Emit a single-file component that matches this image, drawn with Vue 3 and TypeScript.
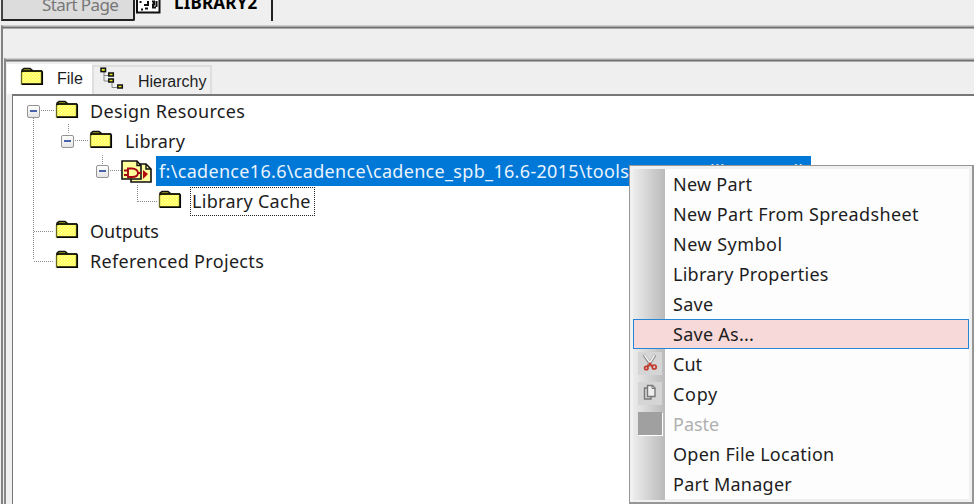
<script setup lang="ts">
type Row = { text: string; depth: number; expander?: boolean; kind?: 'library'; state?: 'selected' | 'focused'; id: string }
const rows: Row[] = [
  { id: 'design', text: 'Design Resources', depth: 0, expander: true },
  { id: 'library', text: 'Library', depth: 1, expander: true },
  { id: 'path', text: 'f:\\cadence16.6\\cadence\\cadence_spb_16.6-2015\\tools\\capture\\library2.olb', depth: 2, expander: true, kind: 'library', state: 'selected' },
  { id: 'cache', text: 'Library Cache', depth: 3, state: 'focused' },
  { id: 'outputs', text: 'Outputs', depth: 0 },
  { id: 'projects', text: 'Referenced Projects', depth: 0 },
]
type Item = { text: string; icon?: 'cut' | 'copy' | 'paste'; active?: boolean; disabled?: boolean }
const items: Item[] = [
  { text: 'New Part' },
  { text: 'New Part From Spreadsheet' },
  { text: 'New Symbol' },
  { text: 'Library Properties' },
  { text: 'Save' },
  { text: 'Save As...', active: true },
  { text: 'Cut', icon: 'cut' },
  { text: 'Copy', icon: 'copy' },
  { text: 'Paste', icon: 'paste', disabled: true },
  { text: 'Open File Location' },
  { text: 'Part Manager' },
]
</script>

<template>
  <div class="window">
    <svg class="defs" width="0" height="0" aria-hidden="true">
      <defs>
        <pattern id="dither" width="3" height="3" patternUnits="userSpaceOnUse">
          <rect width="3" height="3" fill="#ffff4a" />
          <rect width="1.4" height="1.4" fill="#ffffb0" />
          <rect x="1.5" y="1.5" width="1.4" height="1.4" fill="#ffff98" />
        </pattern>
        <symbol id="folder" viewBox="0 0 24 19">
          <path d="M2 5V3.2L4 1.5H10L12 3.2V5" fill="#a8a620" stroke="#111" stroke-width="1.5" />
          <path d="M1.5 5.5L2.5 4H21.5V17H1.5Z" fill="url(#dither)" stroke="#66661c" stroke-width="1.3" />
          <path d="M1.5 5L2.8 4H21.5L22.3 5V17.2H2" fill="none" stroke="#050505" stroke-width="1.5" />
        </symbol>
      </defs>
    </svg>

    <div class="doc-tabs">
      <div class="doc-tab start"><span>Start Page</span></div>
      <div class="doc-tab current">
        <svg class="doc-icon" width="25" height="15" viewBox="0 0 25 15">
          <path d="M1 0V12.5H23.5V0" fill="#fff" stroke="#111" stroke-width="2" />
          <path d="M4.500 1v2M5 9.500h2M8 5h4v-4M9 8.500h3M16 1.500h2v3h-1v4M20.500 1v6M17 7.500h3" fill="none" stroke="#111" stroke-width="2" />
        </svg>
        <span>LIBRARY2</span>
      </div>
    </div>

    <div class="outer">
      <div class="strip"></div>
      <div class="inner">
        <div class="tabs">
          <div class="tab file">
            <svg width="24" height="19"><use href="#folder" /></svg>
            <span>File</span>
          </div>
          <div class="tab hierarchy">
            <svg width="24" height="23" viewBox="0 0 24 23">
              <path d="M4 4V14H10M4 8.500H10M12 16V20.500H17" fill="none" stroke="#888" stroke-width="1" />
              <g fill="#e8e51c" stroke="#111" stroke-width="1.500">
                <rect x="1" y="1.200" width="4.500" height="3.400" />
                <rect x="8.800" y="6" width="4.500" height="3" />
                <rect x="8.800" y="12" width="4.500" height="3" />
                <rect x="17.800" y="18" width="4.500" height="3" />
              </g>
            </svg>
            <span>Hierarchy</span>
          </div>
        </div>
        <div class="tree">
          <svg class="guides" width="160" height="180" viewBox="0 0 160 180">
            <path d="M20.500 22V164M55.500 28V38M89.500 59V69M124.500 89V106" />
            <path d="M28 14.500H41M62 44.500H75M97 74.500H110M125 105.500H144M21 135.500H41M21 165.500H41" />
          </svg>
          <div v-for="row in rows" :key="row.id" class="row" :class="['d' + row.depth, row.id]">
            <span class="toggle"><i v-if="row.expander" class="box"></i></span>
            <svg v-if="row.kind === 'library'" class="lib" width="32" height="24" viewBox="0 0 32 24">
              <path d="M10 4H25L30 9V22H10Z" fill="#ffffa0" stroke="#111" stroke-width="1.600" />
              <path d="M1 1H16L20 5.500V19H1Z" fill="#ffff9c" stroke="#111" stroke-width="1.600" />
              <path d="M16 1V5.500H20M25 4V9H30" fill="none" stroke="#111" stroke-width="1.400" />
              <path d="M7 8.500H11C15 8.500 17 11 17 13C17 15 15 17 11 17H7ZM3 10.500H7M3 15H7M17 13H20" fill="none" stroke="#a60712" stroke-width="1.900" />
              <path d="M22 10L27 14L22 19Z" fill="#b3090c" />
            </svg>
            <svg v-else class="folder" width="24" height="19"><use href="#folder" /></svg>
            <span class="label" :class="row.state"><span class="txt">{{ row.text }}</span></span>
          </div>
        </div>
      </div>
    </div>

    <div class="menu">
      <div v-for="(item, i) in items" :key="item.text" class="item" :class="['m' + i, { active: item.active, disabled: item.disabled }]">
        <span class="gutter">
          <span v-if="item.icon" class="icon" :class="item.icon">
            <svg v-if="item.icon === 'cut'" width="18" height="18" viewBox="0 0 18 18">
              <path d="M3 1L10.500 12M14 1L7 12" stroke="#888" stroke-width="3" />
              <path d="M3.500 1L10.500 11M13.500 1L7.500 11" stroke="#f5f5f5" stroke-width="1.500" />
              <path d="M10 9L6 13M8 9L12 13" stroke="#c43a2e" stroke-width="1.800" />
              <circle cx="5.300" cy="14" r="1.700" fill="none" stroke="#c43a2e" stroke-width="1.700" />
              <circle cx="13.200" cy="13" r="2" fill="none" stroke="#c43a2e" stroke-width="1.700" />
            </svg>
            <svg v-if="item.icon === 'copy'" width="18" height="18" viewBox="0 0 18 18">
              <path d="M7 4H3.500V15H10V12.500" fill="none" stroke="#777" stroke-width="1.400" />
              <path d="M6.500 1.500H11.500L14 4V12.500H6.500Z" fill="#eee" stroke="#777" stroke-width="1.400" />
              <path d="M11 1.500V4.500H14" fill="none" stroke="#777" />
            </svg>
          </span>
        </span>
        <span class="txt">{{ item.text }}</span>
      </div>
    </div>
  </div>
</template>

<style>
body { margin: 0; overflow: hidden; }
</style>
<style scoped>
* { box-sizing: border-box; }
.window { position: relative; width: 974px; height: 504px; overflow: hidden; background: #efefef; display: flex; flex-direction: column; font: 18px/30px "Noto Sans", sans-serif; color: #1d1d1d; white-space: pre; }
.defs { position: absolute; }
svg { display: block; flex: none; }
.doc-tabs { height: 25px; flex: none; display: flex; padding-left: 1px; }
.doc-tab { display: flex; }
.start { width: 134px; height: 21px; padding-left: 39px; border: 2px solid #222; border-left-color: #444; border-top: 0; border-bottom-right-radius: 2px; background: #dcdcdc; color: #777; font: 17px/20px "Noto Sans", sans-serif; letter-spacing: -0.62px; }
.start span { margin-top: -5px; }
.current { width: 138px; height: 21px; padding-left: 1px; border-right: 2px solid #222; color: #000; font: bold 17px/20px "Noto Sans", sans-serif; letter-spacing: 0.2px; }
.current span { margin: -7px 0 0 13px; }
.outer { flex: 1; min-height: 0; margin-left: 1px; border-top: 1px solid #ccc; border-left: 2px solid #828282; box-shadow: inset 0 1px #aaa, inset 0 2px #707070, inset 0 3px #aaa; display: flex; flex-direction: column; padding-top: 3px; }
.strip { height: 29px; flex: none; }
.inner { flex: 1; min-height: 0; margin-left: 1px; border-top: 1px solid #ccc; border-left: 2px solid #888; box-shadow: inset 0 1px #aaa, inset 0 2px #707070, inset 0 3px #aaa; padding: 5px 0 0 1px; display: flex; flex-direction: column; }
.tabs { height: 30px; flex: none; display: flex; font: 16px/22px "Liberation Sans", sans-serif; }
.tab { display: flex; }
.file { width: 85px; background: #fff; padding: 3px 0 0 13px; }
.file span { margin: 1px 0 0 13px; }
.hierarchy { width: 120px; height: 29px; margin-top: 1px; border: 2px solid #dedede; border-bottom: 0; padding-left: 6px; }
.hierarchy span { margin: 4px 0 0 14px; }
.tree { position: relative; flex: 1; min-height: 0; margin-left: 5px; border-top: 2px solid #777; border-left: 1px solid #777; background: #fff; }
.guides { position: absolute; left: 0; top: 0; fill: none; stroke: #8c8c8c; stroke-width: 1; stroke-dasharray: 1 1; }
.row { position: relative; display: flex; height: 30px; align-items: center; }
.row .txt { margin-top: -1px; }
.d0 { padding-left: 14px; }
.d1 { padding-left: 48px; }
.d2 { padding-left: 83px; }
.d3 { padding-left: 117px; }
.toggle { width: 28px; flex: none; }
.box { display: flex; align-items: center; width: 13px; height: 13px; border: 1px solid #949494; border-radius: 2px; background: linear-gradient(#fff, #e4e4e4); padding: 0 2px; }
.box::before { content: ""; width: 7px; height: 1.500px; background: #4862ac; }
.folder { margin-top: -3px; }
.lib { margin: 1px 0 0 -3px; }
.label { display: flex; margin-left: 8px; height: 28px; align-items: center; padding: 0 3px; flex: none; }
.design { letter-spacing: 0.33px; }
.library { letter-spacing: 0.15px; }
.library .label { margin-left: 9px; }
.path { letter-spacing: 0.32px; }
.cache { letter-spacing: 0.29px; }
.projects { letter-spacing: 0.32px; }
.selected { height: 30px; width: 655px; margin-left: 3px; background: #0078d7; color: #e9f3fd; }
.focused { border: 1.500px dotted #222; height: 29px; width: 125px; padding: 0 1px; }
.menu { position: absolute; left: 629px; top: 165px; width: 345px; height: 339px; border: 1px solid #969696; border-right-width: 2px; border-bottom-width: 2px; background: #fdfdfd; box-shadow: inset 0 0 0 3px #f1f1f1; padding: 3px; display: flex; flex-direction: column; }
.item { display: flex; height: 30px; flex: none; align-items: center; letter-spacing: 0.26px; }
.m1 { letter-spacing: 0.37px; }
.m2 { letter-spacing: 0.48px; }
.m6, .m8 { letter-spacing: 0; }
.m7 { letter-spacing: 0.7px; }
.gutter { width: 32px; height: 30px; flex: none; padding: 3px 0 0 5px; background: linear-gradient(90deg, #ececec, #bababa); margin-right: 8px; }
.item:last-child .gutter { height: 31px; }
.active { border: 1.500px solid #2586d8; background: #f7d9d9; }
.active .gutter { background: none; width: 31px; }
.disabled { color: #b0b0b0; }
.icon { display: block; width: 24px; height: 23px; background: #d5d5d5; padding: 2px 0 0 3px; }
.paste { background: #a0a0a0; box-shadow: 1px 1px #fff; }
</style>
